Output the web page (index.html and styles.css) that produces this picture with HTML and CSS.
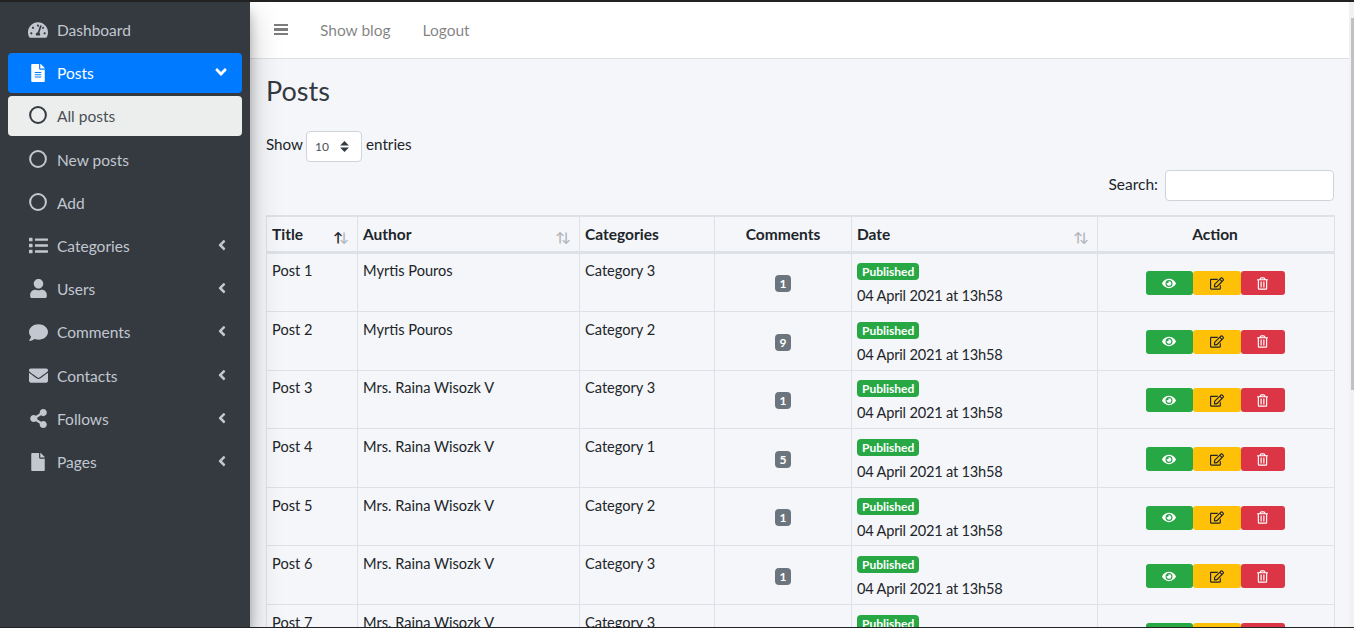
FILE: index.html
```html
<!DOCTYPE html>
<html lang="en">
<head>
<meta charset="utf-8">
<title>Posts</title>
<link rel="stylesheet" href="styles.css">
</head>
<body>
<svg class="defs" aria-hidden="true">
  <symbol id="i-dash" viewBox="0 0 576 512"><path d="M288 32C128.94 32 0 160.94 0 320c0 52.8 14.25 102.26 39.06 144.8 5.61 9.62 16.3 15.2 27.44 15.2h443c11.14 0 21.83-5.58 27.44-15.2C561.75 422.26 576 372.8 576 320c0-159.06-128.94-288-288-288zm0 64c14.71 0 26.58 10.13 30.32 23.65-1.11 2.26-2.64 4.23-3.45 6.67l-9.22 27.67c-5.13 3.49-10.97 6.01-17.64 6.01-17.67 0-32-14.33-32-32S270.33 96 288 96zM96 384c-17.67 0-32-14.33-32-32s14.33-32 32-32 32 14.33 32 32-14.33 32-32 32zm48-160c-17.67 0-32-14.33-32-32s14.33-32 32-32 32 14.33 32 32-14.33 32-32 32zm246.77-72.41l-61.33 184C343.13 347.33 352 364.54 352 384c0 11.72-3.38 22.55-8.88 32H232.88c-5.5-9.45-8.88-20.28-8.88-32 0-33.94 26.5-61.43 59.9-63.59l61.34-184.01c4.17-12.56 17.73-19.45 30.36-15.17 12.57 4.19 19.35 17.79 15.17 30.36zm14.66 57.2l15.52-46.55c3.47-1.29 7.13-2.23 11.05-2.23 17.67 0 32 14.33 32 32s-14.33 32-32 32c-11.38-.01-20.89-6.28-26.57-15.22zM480 384c-17.67 0-32-14.33-32-32s14.33-32 32-32 32 14.33 32 32-14.33 32-32 32z"/></symbol>
  <symbol id="i-filealt" viewBox="0 0 384 512"><path d="M224 136V0H24C10.7 0 0 10.7 0 24v464c0 13.3 10.7 24 24 24h336c13.3 0 24-10.7 24-24V160H248c-13.2 0-24-10.8-24-24zm64 236c0 6.6-5.4 12-12 12H108c-6.6 0-12-5.4-12-12v-8c0-6.6 5.4-12 12-12h168c6.6 0 12 5.4 12 12v8zm0-64c0 6.6-5.4 12-12 12H108c-6.6 0-12-5.4-12-12v-8c0-6.6 5.4-12 12-12h168c6.6 0 12 5.4 12 12v8zm0-72v8c0 6.6-5.4 12-12 12H108c-6.6 0-12-5.4-12-12v-8c0-6.6 5.4-12 12-12h168c6.6 0 12 5.4 12 12zm96-114.1v6.1H256V0h6.1c6.4 0 12.5 2.5 17 7l97.9 98c4.5 4.5 7 10.6 7 16.9z"/></symbol>
  <symbol id="i-file" viewBox="0 0 384 512"><path d="M224 136V0H24C10.7 0 0 10.7 0 24v464c0 13.3 10.7 24 24 24h336c13.3 0 24-10.7 24-24V160H248c-13.2 0-24-10.8-24-24zm160-14.1v6.1H256V0h6.1c6.4 0 12.5 2.5 17 7l97.9 98c4.5 4.5 7 10.6 7 16.9z"/></symbol>
  <symbol id="i-list" viewBox="0 0 512 512"><path d="M80 368H16a16 16 0 0 0-16 16v64a16 16 0 0 0 16 16h64a16 16 0 0 0 16-16v-64a16 16 0 0 0-16-16zm0-320H16A16 16 0 0 0 0 64v64a16 16 0 0 0 16 16h64a16 16 0 0 0 16-16V64a16 16 0 0 0-16-16zm0 160H16a16 16 0 0 0-16 16v64a16 16 0 0 0 16 16h64a16 16 0 0 0 16-16v-64a16 16 0 0 0-16-16zm416 176H176a16 16 0 0 0-16 16v32a16 16 0 0 0 16 16h320a16 16 0 0 0 16-16v-32a16 16 0 0 0-16-16zm0-320H176a16 16 0 0 0-16 16v32a16 16 0 0 0 16 16h320a16 16 0 0 0 16-16V80a16 16 0 0 0-16-16zm0 160H176a16 16 0 0 0-16 16v32a16 16 0 0 0 16 16h320a16 16 0 0 0 16-16v-32a16 16 0 0 0-16-16z"/></symbol>
  <symbol id="i-user" viewBox="0 0 448 512"><path d="M224 256c70.7 0 128-57.3 128-128S294.7 0 224 0 96 57.3 96 128s57.3 128 128 128zm89.6 32h-16.7c-22.2 10.2-46.9 16-72.9 16s-50.6-5.8-72.9-16h-16.7C60.2 288 0 348.2 0 422.4V464c0 26.5 21.5 48 48 48h352c26.5 0 48-21.5 48-48v-41.6c0-74.2-60.2-134.4-134.4-134.4z"/></symbol>
  <symbol id="i-comment" viewBox="0 0 512 512"><path d="M256 32C114.6 32 0 125.1 0 240c0 49.6 21.4 95 57 130.7C44.5 421.1 2.7 466 2.2 466.5c-2.2 2.3-2.8 5.7-1.5 8.7S4.8 480 8 480c66.3 0 116-31.8 140.6-51.4 32.7 12.3 69 19.4 107.4 19.4 141.4 0 256-93.1 256-208S397.4 32 256 32z"/></symbol>
  <symbol id="i-env" viewBox="0 0 512 512"><path d="M502.3 190.8c3.9-3.1 9.7-.2 9.7 4.7V400c0 26.5-21.5 48-48 48H48c-26.5 0-48-21.5-48-48V195.6c0-5 5.7-7.8 9.7-4.7 22.4 17.4 52.1 39.5 154.1 113.6 21.1 15.4 56.7 47.8 92.2 47.6 35.7.3 72-32.8 92.3-47.6 102-74.1 131.6-96.3 154-113.7zM256 320c23.2.4 56.6-29.2 73.4-41.4 132.7-96.3 142.8-104.7 173.4-128.7 5.8-4.5 9.2-11.5 9.2-18.9v-19c0-26.5-21.5-48-48-48H48C21.5 64 0 85.5 0 112v19c0 7.4 3.4 14.3 9.2 18.9 30.6 23.9 40.7 32.4 173.4 128.7 16.8 12.2 50.2 41.8 73.4 41.4z"/></symbol>
  <symbol id="i-share" viewBox="0 0 448 512"><path d="M352 320c-22.608 0-43.387 7.819-59.79 20.895l-102.486-64.054a96.551 96.551 0 0 0 0-41.683l102.486-64.054C308.613 184.181 329.392 192 352 192c53.019 0 96-42.981 96-96S405.019 0 352 0s-96 42.981-96 96c0 7.158.79 14.13 2.276 20.841L155.79 180.895C139.387 167.819 118.608 160 96 160c-53.019 0-96 42.981-96 96s42.981 96 96 96c22.608 0 43.387-7.819 59.79-20.895l102.486 64.054A96.301 96.301 0 0 0 256 416c0 53.019 42.981 96 96 96s96-42.981 96-96-42.981-96-96-96z"/></symbol>
  <symbol id="i-left" viewBox="0 0 256 512"><path d="M31.7 239l136-136c9.4-9.4 24.6-9.4 33.9 0l22.6 22.6c9.4 9.4 9.4 24.6 0 33.9L127.9 256l96.4 96.4c9.4 9.4 9.4 24.6 0 33.9L201.7 413c-9.4 9.4-24.6 9.4-33.9 0l-136-136c-9.5-9.4-9.5-24.6-.1-34z"/></symbol>
  <symbol id="i-down" viewBox="0 0 320 512"><path d="M143 352.3L7 216.3c-9.4-9.4-9.4-24.6 0-33.9l22.6-22.6c9.4-9.4 24.6-9.4 33.9 0l96.4 96.4 96.4-96.4c9.4-9.4 24.6-9.4 33.9 0l22.6 22.6c9.4 9.4 9.4 24.6 0 33.9l-136 136c-9.2 9.4-24.4 9.4-33.8 0z"/></symbol>
  <symbol id="i-eye" viewBox="0 0 576 512"><path d="M572.52 241.4C518.29 135.59 410.93 64 288 64S57.68 135.64 3.48 241.41a32.35 32.35 0 0 0 0 29.19C57.71 376.41 165.07 448 288 448s230.32-71.64 284.52-177.41a32.35 32.35 0 0 0 0-29.19zM288 400a144 144 0 1 1 144-144 143.93 143.93 0 0 1-144 144zm0-240a95.31 95.31 0 0 0-25.31 3.79 47.85 47.85 0 0 1-66.9 66.9A95.78 95.78 0 1 0 288 160z"/></symbol>
  <symbol id="i-edit" viewBox="0 0 576 512"><path d="M402.3 344.9l32-32c5-5 13.7-1.5 13.7 5.7V464c0 26.5-21.5 48-48 48H48c-26.5 0-48-21.5-48-48V112c0-26.5 21.5-48 48-48h273.5c7.1 0 10.7 8.6 5.7 13.7l-32 32c-1.5 1.5-3.5 2.3-5.7 2.3H48v352h352V350.5c0-2.1.8-4.1 2.3-5.6zm156.6-201.8L296.3 405.7l-90.4 10c-26.2 2.9-48.5-19.2-45.6-45.6l10-90.4L432.9 17.1c22.9-22.9 59.9-22.9 82.7 0l43.2 43.2c22.9 22.9 22.9 60 .1 82.8zM460.1 174L402 115.9 216.2 301.8l-7.3 65.3 65.3-7.3L460.1 174zm64.8-79.7l-43.2-43.2c-4.1-4.1-10.8-4.1-14.8 0L436 82l58.1 58.1 30.9-30.9c4-4.2 4-10.8-.1-14.9z"/></symbol>
  <symbol id="i-trash" viewBox="0 0 448 512"><path d="M268 416h24a12 12 0 0 0 12-12V188a12 12 0 0 0-12-12h-24a12 12 0 0 0-12 12v216a12 12 0 0 0 12 12zM432 80h-82.41l-34-56.7A48 48 0 0 0 274.41 0H173.59a48 48 0 0 0-41.16 23.3L98.41 80H16A16 16 0 0 0 0 96v16a16 16 0 0 0 16 16h16v336a48 48 0 0 0 48 48h288a48 48 0 0 0 48-48V128h16a16 16 0 0 0 16-16V96a16 16 0 0 0-16-16zM171.84 50.91A6 6 0 0 1 177 48h94a6 6 0 0 1 5.15 2.91L293.61 80H154.39zM368 464H80V128h288zm-212-48h24a12 12 0 0 0 12-12V188a12 12 0 0 0-12-12h-24a12 12 0 0 0-12 12v216a12 12 0 0 0 12 12z"/></symbol>
  <symbol id="i-ring" viewBox="0 0 18 18"><circle cx="9" cy="9" r="7.9" fill="none" stroke="currentColor" stroke-width="2"/></symbol>
</svg>

<div class="app">
  <aside class="sidebar">
    <nav class="menu">
      <a class="item"><span class="ico"><svg class="ic-dash"><use href="#i-dash"/></svg></span><span>Dashboard</span></a>
      <a class="item active"><span class="ico"><svg class="ic-file"><use href="#i-filealt"/></svg></span><span>Posts</span><svg class="chev-down"><use href="#i-down"/></svg></a>
      <a class="item current"><span class="ico"><svg class="ic-ring"><use href="#i-ring"/></svg></span><span>All posts</span></a>
      <a class="item"><span class="ico"><svg class="ic-ring"><use href="#i-ring"/></svg></span><span>New posts</span></a>
      <a class="item"><span class="ico"><svg class="ic-ring"><use href="#i-ring"/></svg></span><span>Add</span></a>
      <a class="item"><span class="ico"><svg class="ic-wide"><use href="#i-list"/></svg></span><span>Categories</span><svg class="chev"><use href="#i-left"/></svg></a>
      <a class="item"><span class="ico"><svg class="ic-user"><use href="#i-user"/></svg></span><span>Users</span><svg class="chev"><use href="#i-left"/></svg></a>
      <a class="item"><span class="ico"><svg class="ic-wide"><use href="#i-comment"/></svg></span><span>Comments</span><svg class="chev"><use href="#i-left"/></svg></a>
      <a class="item"><span class="ico"><svg class="ic-wide"><use href="#i-env"/></svg></span><span>Contacts</span><svg class="chev"><use href="#i-left"/></svg></a>
      <a class="item"><span class="ico"><svg class="ic-user"><use href="#i-share"/></svg></span><span>Follows</span><svg class="chev"><use href="#i-left"/></svg></a>
      <a class="item"><span class="ico"><svg class="ic-file"><use href="#i-file"/></svg></span><span>Pages</span><svg class="chev"><use href="#i-left"/></svg></a>
    </nav>
  </aside>

  <main class="main">
    <header class="navbar">
      <span class="burger"><i></i><i></i><i></i></span>
      <a class="navlink first">Show blog</a>
      <a class="navlink">Logout</a>
    </header>
    <section class="content">
      <h1 class="title">Posts</h1>
      <div class="length"><span>Show</span><select class="picker"><option>10</option></select><span>entries</span></div>
      <div class="search"><label class="search-label" for="q">Search:</label><input id="q" class="search-input" type="search"></div>
      <table class="grid">
        <colgroup><col class="c1"><col class="c2"><col class="c3"><col class="c4"><col class="c5"><col class="c6"></colgroup>
        <thead>
          <tr>
            <th class="sort asc">Title</th>
            <th class="sort">Author</th>
            <th>Categories</th>
            <th class="mid">Comments</th>
            <th class="sort">Date</th>
            <th class="mid action">Action</th>
          </tr>
        </thead>
        <tbody>
          <tr><td>Post 1</td><td>Myrtis Pouros</td><td>Category 3</td><td class="mid vm"><span class="badge grey">1</span></td><td><span class="badge green">Published</span><div class="when">04 April 2021 at 13h58</div></td><td class="mid vm"><div class="btns"><a class="btn b-green"><svg class="bi-eye"><use href="#i-eye"/></svg></a><a class="btn b-yellow"><svg class="bi-edit"><use href="#i-edit"/></svg></a><a class="btn b-red"><svg class="bi-trash"><use href="#i-trash"/></svg></a></div></td></tr>
          <tr><td>Post 2</td><td>Myrtis Pouros</td><td>Category 2</td><td class="mid vm"><span class="badge grey">9</span></td><td><span class="badge green">Published</span><div class="when">04 April 2021 at 13h58</div></td><td class="mid vm"><div class="btns"><a class="btn b-green"><svg class="bi-eye"><use href="#i-eye"/></svg></a><a class="btn b-yellow"><svg class="bi-edit"><use href="#i-edit"/></svg></a><a class="btn b-red"><svg class="bi-trash"><use href="#i-trash"/></svg></a></div></td></tr>
          <tr><td>Post 3</td><td>Mrs. Raina Wisozk V</td><td>Category 3</td><td class="mid vm"><span class="badge grey">1</span></td><td><span class="badge green">Published</span><div class="when">04 April 2021 at 13h58</div></td><td class="mid vm"><div class="btns"><a class="btn b-green"><svg class="bi-eye"><use href="#i-eye"/></svg></a><a class="btn b-yellow"><svg class="bi-edit"><use href="#i-edit"/></svg></a><a class="btn b-red"><svg class="bi-trash"><use href="#i-trash"/></svg></a></div></td></tr>
          <tr><td>Post 4</td><td>Mrs. Raina Wisozk V</td><td>Category 1</td><td class="mid vm"><span class="badge grey">5</span></td><td><span class="badge green">Published</span><div class="when">04 April 2021 at 13h58</div></td><td class="mid vm"><div class="btns"><a class="btn b-green"><svg class="bi-eye"><use href="#i-eye"/></svg></a><a class="btn b-yellow"><svg class="bi-edit"><use href="#i-edit"/></svg></a><a class="btn b-red"><svg class="bi-trash"><use href="#i-trash"/></svg></a></div></td></tr>
          <tr><td>Post 5</td><td>Mrs. Raina Wisozk V</td><td>Category 2</td><td class="mid vm"><span class="badge grey">1</span></td><td><span class="badge green">Published</span><div class="when">04 April 2021 at 13h58</div></td><td class="mid vm"><div class="btns"><a class="btn b-green"><svg class="bi-eye"><use href="#i-eye"/></svg></a><a class="btn b-yellow"><svg class="bi-edit"><use href="#i-edit"/></svg></a><a class="btn b-red"><svg class="bi-trash"><use href="#i-trash"/></svg></a></div></td></tr>
          <tr><td>Post 6</td><td>Mrs. Raina Wisozk V</td><td>Category 3</td><td class="mid vm"><span class="badge grey">1</span></td><td><span class="badge green">Published</span><div class="when">04 April 2021 at 13h58</div></td><td class="mid vm"><div class="btns"><a class="btn b-green"><svg class="bi-eye"><use href="#i-eye"/></svg></a><a class="btn b-yellow"><svg class="bi-edit"><use href="#i-edit"/></svg></a><a class="btn b-red"><svg class="bi-trash"><use href="#i-trash"/></svg></a></div></td></tr>
          <tr><td>Post 7</td><td>Mrs. Raina Wisozk V</td><td>Category 3</td><td class="mid vm"><span class="badge grey">1</span></td><td><span class="badge green">Published</span><div class="when">04 April 2021 at 13h58</div></td><td class="mid vm"><div class="btns"><a class="btn b-green"><svg class="bi-eye"><use href="#i-eye"/></svg></a><a class="btn b-yellow"><svg class="bi-edit"><use href="#i-edit"/></svg></a><a class="btn b-red"><svg class="bi-trash"><use href="#i-trash"/></svg></a></div></td></tr>
        </tbody>
      </table>
    </section>
  </main>

  <div class="scroll"><div class="thumb"></div></div>
</div>
</body>
</html>
```

FILE: styles.css
```css
* { box-sizing: border-box; }
html, body { margin: 0; height: 628px; overflow: hidden; }
body {
  background: #222;
  padding: 2px 0 1px;
  font-family: "Lato", "Noto Sans", sans-serif;
  font-size: 15.5px;
  line-height: 24px;
  color: #212529;
}
.defs { display: none; }
svg { fill: currentColor; display: block; }

.app { display: flex; height: 625px; overflow: hidden; }

/* sidebar */
.sidebar {
  flex: 0 0 250px;
  background: #343a40;
  position: relative;
  z-index: 2;
  box-shadow: 0 14px 28px rgba(0,0,0,.25), 0 10px 10px rgba(0,0,0,.22);
  padding: 8px 8px 0;
}
.menu { display: flex; flex-direction: column; gap: 3.2px; }
.item {
  display: flex;
  align-items: center;
  height: 40px;
  padding: 0 15px 0 20px;
  border-radius: 4px;
  color: #c2c7d0;
}
.ico { flex: 0 0 20px; margin-right: 9px; display: flex; justify-content: center; }
.active { background: #007bff; color: #fff; }
.current { background: #eceeed; color: #4a4f55; }
.current .ico { color: #343a40; }
.ic-dash { width: 20px; height: 18px; }
.ic-file { width: 14px; height: 18px; }
.ic-ring { width: 18px; height: 18px; margin-top: -2px; }
.ic-wide { width: 19px; height: 19px; }
.ic-user { width: 17px; height: 19px; margin-top: -1px; }
.chev { width: 10px; height: 16px; margin-left: auto; margin-top: -2px; }
.chev-down { width: 12px; height: 18px; margin-left: auto; margin-top: -3px; }

/* main */
.main { flex: 1; min-width: 0; background: #f4f6f9; overflow: hidden; }
.navbar {
  height: 57px;
  background: #fff;
  border-bottom: 1px solid #dee2e6;
  display: flex;
  align-items: center;
  padding-left: 24px;
}
.burger { width: 14px; display: flex; flex-direction: column; gap: 2.4px; margin-top: -1px; }
.burger i { display: block; height: 2.4px; background: #7d7d7d; }
.navlink { color: rgba(0,0,0,.5); margin-right: 32px; }
.first { margin-left: 32px; }

.content { padding: 12px 14px 0 16px; }
.title { margin: 0; font-size: 27px; line-height: 40px; font-weight: 400; color: #343a40; }
.length { display: flex; align-items: flex-start; gap: 3px; margin-top: 20px; height: 31px; line-height: 27px; font-size: 15.2px; }
.picker {
  appearance: none;
  -webkit-appearance: none;
  width: 56px;
  height: 31px;
  margin-right: 1px;
  padding: 2px 8px;
  border: 1px solid #ced4da;
  border-radius: 4px;
  font: 12px/1 "Lato", sans-serif;
  color: #495057;
  background: #fff url("data:image/svg+xml,%3csvg xmlns='http://www.w3.org/2000/svg' width='4' height='5' viewBox='0 0 4 5'%3e%3cpath fill='%23343a40' d='M2 0L0 2h4zm0 5L0 3h4z'/%3e%3c/svg%3e") no-repeat right 12px center / 9px 11px;
}
.search { display: flex; justify-content: flex-end; align-items: flex-start; gap: 7px; margin-top: 8px; padding-right: 1px; }
.search-label { line-height: 29px; }
.search-input {
  width: 169px;
  height: 31px;
  border: 1px solid #ced4da;
  border-radius: 4px;
  background: #fff;
}

/* table */
.grid {
  table-layout: fixed;
  border-collapse: collapse;
  width: 1068px;
  margin-top: 14px;
}
.c1 { width: 91px; }
.c2 { width: 222px; }
.c3 { width: 135px; }
.c4 { width: 137px; }
.c5 { width: 246px; }
.c6 { width: 237px; }
th, td { border: 1px solid #dee2e6; text-align: left; vertical-align: top; }
td { font-size: 14.6px; padding: 5.8px 5px 2.8px; }
th {
  height: 36px;
  font-weight: 700;
  vertical-align: middle;
  position: relative;
  border-top-width: 2px;
  border-bottom-width: 3px;
  padding: 3px 5px;
}
.mid { text-align: center; }
.action { padding-right: 7px; }
td.vm { vertical-align: middle; padding: 4.8px 5px; }
.sort::before, .sort::after {
  position: absolute;
  right: 14px;
  top: 8px;
  font-size: 13px;
  font-weight: 700;
  opacity: .3;
  content: "\2191";
}
.sort::after { right: 8px; content: "\2193"; }
.asc::before { opacity: 1; }

.badge {
  display: inline-block;
  height: 17px;
  padding: 0 5px;
  border-radius: 4px;
  font-size: 12px;
  line-height: 17px;
  font-weight: 700;
  color: #fff;
  vertical-align: top;
  margin-top: 4px;
}
.vm .badge { margin-top: 0; vertical-align: middle; }
.green { background: #28a745; }
.grey { background: #6c757d; }
.when { letter-spacing: -.2px; padding-top: 1px; }

.btns { display: flex; justify-content: center; margin: 2px 2px 0 0; }
.btn {
  height: 24px;
  display: flex;
  align-items: center;
  justify-content: center;
  border-radius: 3px;
}
.b-green { width: 47px; background: #28a745; color: #fff; }
.b-yellow { width: 48px; background: #ffc107; color: #212529; }
.b-red { width: 44px; background: #dc3545; color: #fff; }
.bi-eye { width: 14px; height: 13px; }
.bi-edit { width: 14px; height: 13px; }
.bi-trash { width: 11px; height: 13px; }

/* page scrollbar */
.scroll { flex: 0 0 5px; background: #f1f1f1; padding: 16px 0 0 2px; }
.thumb { height: 372px; background: #c1c1c1; }
```
